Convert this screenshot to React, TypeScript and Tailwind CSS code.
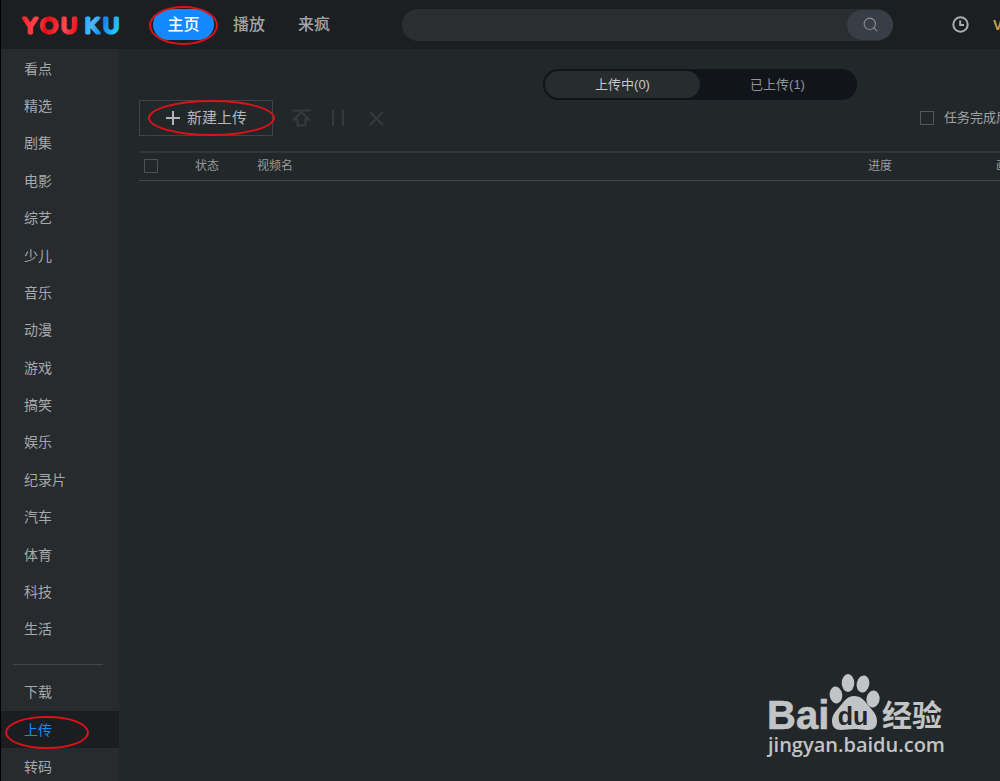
import { Search, X } from 'lucide-react';

const channels = [
  '看点', '精选', '剧集', '电影', '综艺', '少儿', '音乐', '动漫',
  '游戏', '搞笑', '娱乐', '纪录片', '汽车', '体育', '科技', '生活',
];

const tools = ['下载', '上传', '转码'];

// Hand-drawn style marker around a control
function Marker({ className }: { className: string }) {
  return (
    <span
      aria-hidden="true"
      className={`pointer-events-none absolute z-10 rounded-[50%] border-2 border-[#dd1118] ${className}`}
    />
  );
}

function Logo() {
  return (
    <svg width="100" height="26" viewBox="0 0 100 26" role="img" aria-label="YOUKU" className="shrink-0">
      <defs>
        <linearGradient id="warm" x1="0" x2="60" y1="0" y2="12" gradientUnits="userSpaceOnUse">
          <stop offset="0" stopColor="#ff1a1f" />
          <stop offset="0.3" stopColor="#ff4a50" />
          <stop offset="0.45" stopColor="#e60a14" />
          <stop offset="0.75" stopColor="#ff4a50" />
          <stop offset="1" stopColor="#e60012" />
        </linearGradient>
        <linearGradient id="cool" x1="60" x2="100" y1="0" y2="14" gradientUnits="userSpaceOnUse">
          <stop offset="0" stopColor="#12a2ff" />
          <stop offset="0.35" stopColor="#4ab8f8" />
          <stop offset="0.6" stopColor="#1686f0" />
          <stop offset="1" stopColor="#28d4ff" />
        </linearGradient>
      </defs>
      <g
        fontFamily="Lato, sans-serif"
        fontSize="22"
        fontWeight="400"
        textAnchor="middle"
        strokeWidth="3"
        strokeLinejoin="round"
      >
        <text y="21" x="9 28 48" fill="url(#warm)" stroke="url(#warm)">YOU</text>
        <text y="21" x="71 90" fill="url(#cool)" stroke="url(#cool)">KU</text>
      </g>
    </svg>
  );
}

function Header() {
  return (
    <header className="flex h-[49px] shrink-0 items-center overflow-hidden bg-[#1b1f21] pl-5">
      <Logo />
      <nav className="ml-8 flex shrink-0 items-center font-medium">
        <a href="#home" className="relative flex h-[31px] w-[61px] items-center justify-center rounded-full bg-[#1489ff] text-white">
          主页
          <Marker className="-inset-x-1 -top-[3px] -bottom-[5px]" />
        </a>
        <a href="#play" className="ml-[19px] text-[#a3a5a6]">播放</a>
        <a href="#laifeng" className="ml-[33px] text-[#a3a5a6]">来疯</a>
      </nav>
      <form className="ml-[72px] flex h-8 min-w-0 flex-1 rounded-full bg-[#2b2d31]">
        <input aria-label="搜索" className="min-w-0 flex-1 bg-transparent px-4 text-sm text-gray-300 outline-none" />
        <button type="button" aria-label="搜索" className="my-px flex w-[46px] items-center justify-center rounded-full bg-[#383e46] text-[#8b8e92]">
          <Search size={17} strokeWidth={1.5} />
        </button>
      </form>
      <button type="button" aria-label="历史" className="ml-[59px] shrink-0 text-[#aaacad]">
        <svg width="17" height="17" viewBox="0 0 17 17" fill="none" stroke="currentColor" strokeWidth="2">
          <circle cx="8.5" cy="8.5" r="7.2" />
          <path d="M8.2 4.5V9H12" />
        </svg>
      </button>
      <a href="#vip" className="ml-6 w-[7px] shrink-0 overflow-hidden text-sm font-bold whitespace-nowrap text-[#cf9f45]">VIP</a>
    </header>
  );
}

function Sidebar() {
  return (
    <aside className="w-[118px] shrink-0 bg-[#272b2e] pt-px text-sm text-[#a6a8aa]">
      <nav className="flex h-[598px] flex-col">
        {channels.map((name) => (
          <a key={name} href={`#${name}`} className="flex flex-1 items-center pl-[23px]">
            {name}
          </a>
        ))}
      </nav>
      <hr className="mt-4 mr-4 mb-2 ml-3 border-[#414548]" />
      <nav className="flex h-[113px] flex-col">
        {tools.map((name) => (
          <a
            key={name}
            href={`#${name}`}
            className={`relative flex flex-1 items-center pl-[23px] ${name === '上传' ? 'bg-[#1a1e20] text-[#1489ff]' : ''}`}
          >
            {name}
            {name === '上传' && <Marker className="top-[5px] right-[30px] -bottom-px left-1" />}
          </a>
        ))}
      </nav>
    </aside>
  );
}

function Toolbar() {
  return (
    <div className="flex h-9 items-center">
      <button type="button" className="relative flex h-9 w-[134px] shrink-0 items-center gap-[7px] border border-[#404447] pl-[26px] text-[15px] text-[#b4b6b7]">
        <svg width="14" height="14" viewBox="0 0 14 14" stroke="currentColor" strokeWidth="2">
          <path d="M7 0V14M0 7H14" />
        </svg>
        新建上传
        <Marker className="-top-px -right-[3px] -bottom-px left-2" />
      </button>
      <div className="ml-[19px] flex items-center text-[#363a3d]">
        <button type="button" aria-label="开始" disabled>
          <svg width="19" height="18" viewBox="0 0 19 18" fill="none" stroke="currentColor" strokeWidth="2">
            <path d="M0.5 1.5H18.5M9.5 3L2 10.5H5.5V16.5H13.5V10.5H17Z" />
          </svg>
        </button>
        <button type="button" aria-label="暂停" disabled className="ml-5">
          <svg width="14" height="18" viewBox="0 0 14 18" stroke="currentColor" strokeWidth="2">
            <path d="M2 1V17M12 1V17" />
          </svg>
        </button>
        <button type="button" aria-label="删除" disabled className="ml-5">
          <X size={23} strokeWidth={2} />
        </button>
      </div>
      <label className="ml-auto flex items-center gap-[10px] text-[13px] text-[#a0a2a4]">
        <input type="checkbox" className="size-[14px] shrink-0 appearance-none border border-[#55595c]" />
        <span className="w-14 overflow-hidden whitespace-nowrap">任务完成后</span>
      </label>
    </div>
  );
}

function UploadTable() {
  return (
    <table className="mt-[15px] w-full table-fixed border-collapse text-xs text-[#989a9c]">
      <thead>
        <tr className="h-7 border-t-2 border-b border-t-[#32363a] border-b-[#44484b] text-left">
          <th className="w-14 pl-[5px]">
            <input type="checkbox" aria-label="全选" className="block size-[14px] appearance-none border border-[#4d5154]" />
          </th>
          <th className="w-[62px] font-normal">状态</th>
          <th className="font-normal">视频名</th>
          <th className="w-32 font-normal">进度</th>
          <th className="w-1 overflow-hidden font-normal whitespace-nowrap">画质</th>
        </tr>
      </thead>
    </table>
  );
}

function Watermark() {
  return (
    <div className="absolute right-[54px] bottom-[22px] text-[#c3c4c5]">
      <svg width="180" height="86" viewBox="0 0 180 86" fill="currentColor" role="img" aria-label="Baidu 经验">
        <text x="1" y="56" fontFamily="'Liberation Sans', sans-serif" fontWeight="700" fontSize="40" stroke="currentColor" strokeWidth="0.6">Bai</text>
        <ellipse cx="70" cy="22" rx="6.3" ry="8.5" transform="rotate(-8 70 22)" />
        <ellipse cx="82" cy="10" rx="6.3" ry="8.9" />
        <ellipse cx="97" cy="11" rx="6.3" ry="8.7" transform="rotate(12 97 11)" />
        <ellipse cx="107" cy="26" rx="6.6" ry="8.5" transform="rotate(8 107 26)" />
        <path d="M88 23C95 23 98 27 102 32C106 37 111 41 111 48C111 54 108 57 102 57C96 57 93 56 88 56C84 56 80 57 75 57C69 57 66 54 66 48C66 41 71 37 75 32C79 27 82 23 88 23Z" />
        <text x="87" y="52" textAnchor="middle" fontFamily="'Liberation Sans', sans-serif" fontWeight="700" fontSize="25" fill="#22272a">du</text>
        <text x="116" y="53" fontFamily="'Noto Sans CJK SC', sans-serif" fontWeight="700" fontSize="30">经验</text>
        <text x="2" y="79" fontFamily="'Open Sans', sans-serif" fontWeight="600" fontSize="20">jingyan.baidu.com</text>
      </svg>
    </div>
  );
}

export default function App() {
  return (
    <div className="relative flex h-screen flex-col overflow-hidden border-l border-black bg-[#22272a] font-['Liberation_Sans','Noto_Sans_CJK_SC',sans-serif]">
      <Header />
      <div className="flex min-h-0 flex-1">
        <Sidebar />
        <main className="min-w-0 flex-1 pt-5 pl-5">
          <div role="tablist" className="mr-[143px] ml-auto flex h-[31px] w-[314px] rounded-full bg-[#111418] p-0.5 text-[13px]">
            <button type="button" role="tab" aria-selected="true" className="flex-1 rounded-full bg-[#272c2f] text-[#c5c7c8]">
              上传中(0)
            </button>
            <button type="button" role="tab" aria-selected="false" className="flex-1 text-[#929496]">
              已上传(1)
            </button>
          </div>
          <Toolbar />
          <UploadTable />
        </main>
      </div>
      <Watermark />
    </div>
  );
}
